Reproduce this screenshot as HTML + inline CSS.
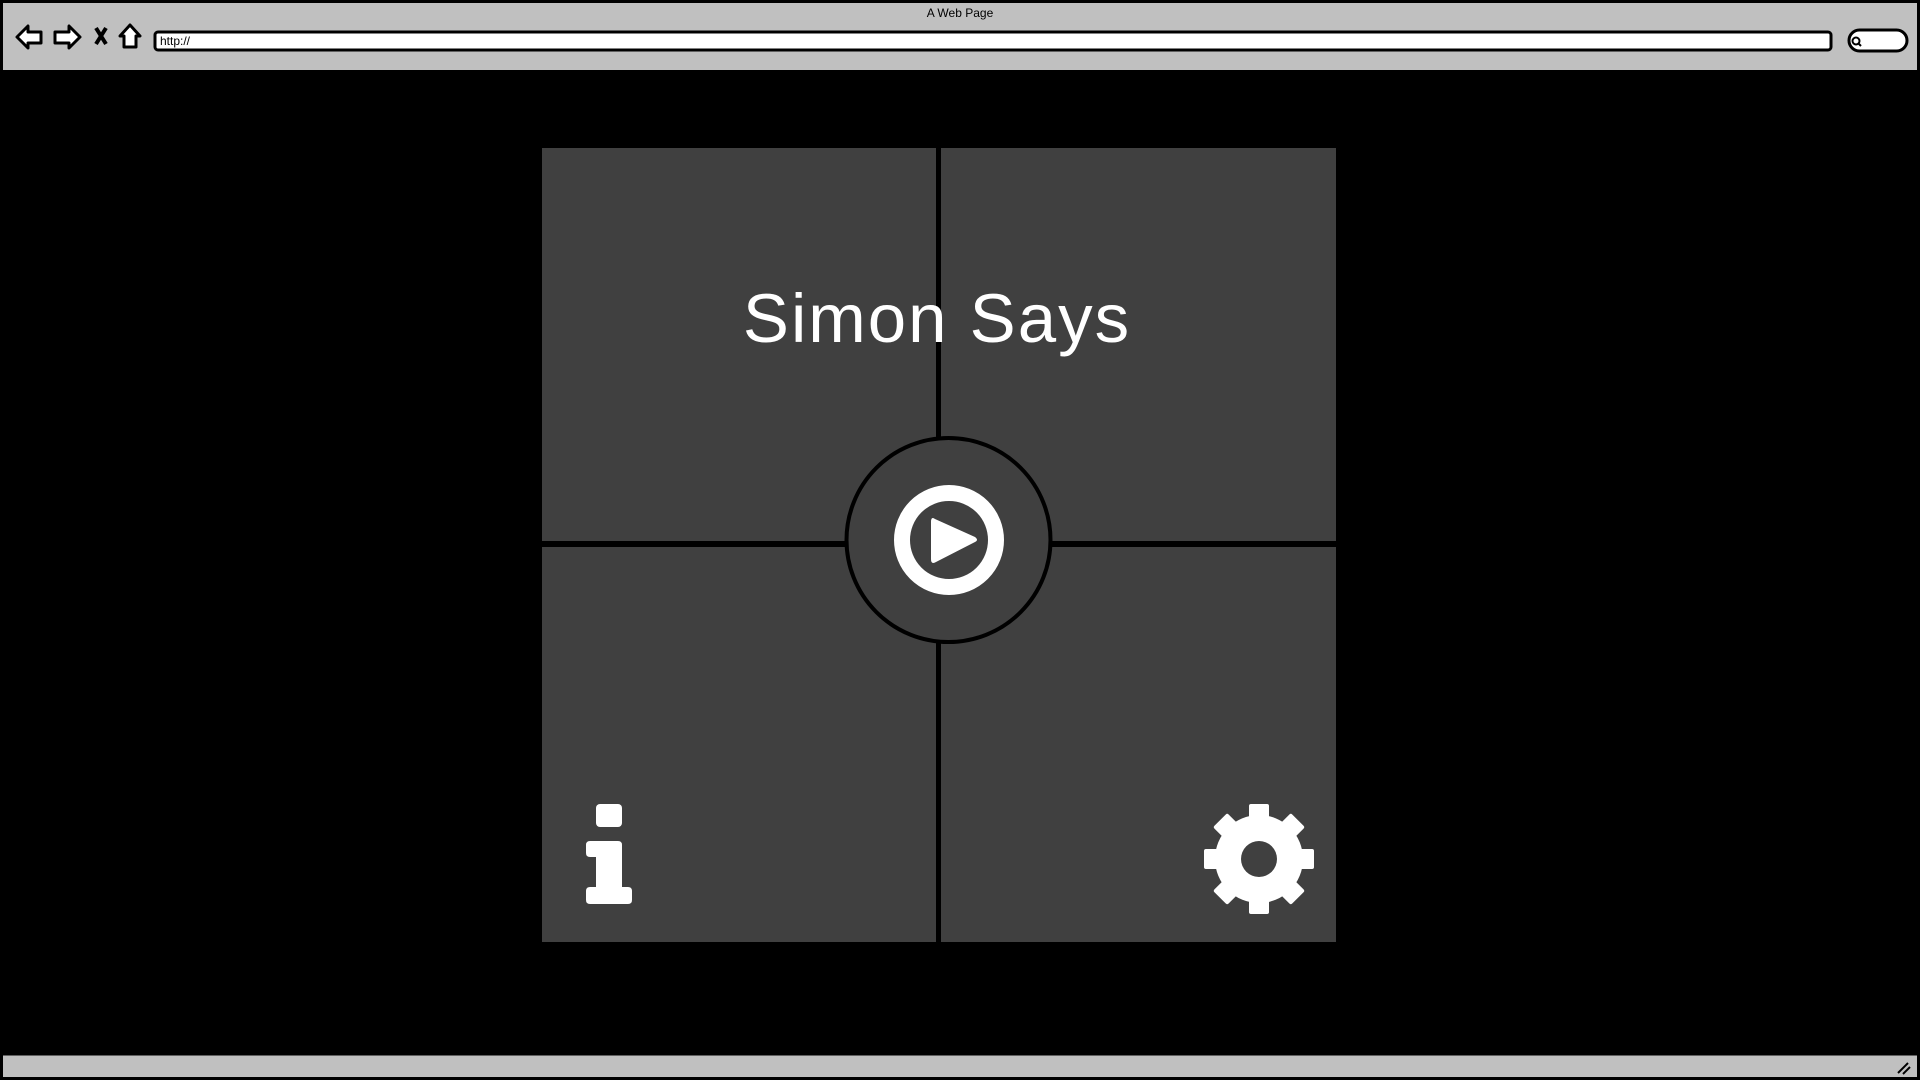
<!DOCTYPE html>
<html><head><style>
html,body{margin:0;padding:0;background:#000;width:1920px;height:1080px;overflow:hidden;font-family:"Liberation Sans",sans-serif}
</style></head><body>
<svg width="1920" height="1080" viewBox="0 0 1920 1080" xmlns="http://www.w3.org/2000/svg" style="position:absolute;left:0;top:0">
<rect x="0" y="0" width="1920" height="1080" fill="#000"/>
<rect x="1.5" y="1.5" width="1917" height="70" fill="#c0c0c0" stroke="#000" stroke-width="3"/>
<text x="960" y="17" font-size="12" text-anchor="middle" fill="#000" font-family="Liberation Sans, sans-serif">A Web Page</text>
<path d="M17 37 L28 26 L28 32 L41 32 L41 43 L28 43 L28 48 Z" fill="#fff" stroke="#000" stroke-width="3" stroke-linejoin="round"/>
<path d="M80 37 L69 26 L69 32 L55 32 L55 43 L69 43 L69 48 Z" fill="#fff" stroke="#000" stroke-width="3" stroke-linejoin="round"/>
<path d="M96 28 L106 44 M106 28 L96 44" stroke="#000" stroke-width="4"/>
<path d="M130 25 L140 36 L136 36 L136 47 L124 47 L124 36 L120 36 Z" fill="#fff" stroke="#000" stroke-width="3" stroke-linejoin="round"/>
<rect x="155" y="32" width="1676" height="18" rx="3" fill="#fff" stroke="#000" stroke-width="3"/>
<text x="160" y="45" font-size="12" fill="#000">http://</text>
<rect x="1849" y="30" width="58" height="21" rx="10.5" fill="#fff" stroke="#000" stroke-width="3"/>
<circle cx="1856" cy="41" r="3.5" fill="none" stroke="#000" stroke-width="2"/>
<path d="M1858 43 L1861 46" stroke="#000" stroke-width="2"/>
<rect x="1.5" y="1054" width="1917" height="24.5" fill="#c0c0c0" stroke="#000" stroke-width="3"/>
<path d="M1898 1073 L1908 1063 M1903 1074 L1910 1067" stroke="#000" stroke-width="2"/>
<g fill="#404040" stroke="#000" stroke-width="2">
<rect x="541" y="147" width="396" height="396"/>
<rect x="940" y="147" width="397" height="396"/>
<rect x="541" y="546" width="396" height="397"/>
<rect x="940" y="546" width="397" height="397"/>
</g>
<rect x="936" y="147" width="5" height="796" fill="#000"/>
<rect x="541" y="541" width="796" height="5" fill="#000"/>
<text x="937" y="342" font-size="69" letter-spacing="2" text-anchor="middle" fill="#fff" font-family="Liberation Sans, sans-serif">Simon Says</text>
<circle cx="948.5" cy="540" r="102" fill="#404040" stroke="#000" stroke-width="4"/>
<circle cx="949" cy="540" r="47" fill="none" stroke="#fff" stroke-width="16"/>
<path d="M935 519 Q931 516 931 522 L931 559 Q931 565 936 562 L975 542 Q979 540 975 537 Z" fill="#fff"/>
<rect x="596" y="804" width="26" height="23" rx="4" fill="#fff"/>
<path d="M590 841 L618 841 Q622 841 622 845 L622 887 L628 887 Q632 887 632 891 L632 900 Q632 904 628 904 L590 904 Q586 904 586 900 L586 891 Q586 887 590 887 L596 887 L596 857 L590 857 Q586 857 586 853 L586 845 Q586 841 590 841 Z" fill="#fff"/>
<g transform="translate(1259,859)" fill="#fff">
<circle r="44"/>
<g id="t"><rect x="-10" y="-55" width="20" height="20" rx="2"/></g>
<use href="#t" transform="rotate(45)"/>
<use href="#t" transform="rotate(90)"/>
<use href="#t" transform="rotate(135)"/>
<use href="#t" transform="rotate(180)"/>
<use href="#t" transform="rotate(225)"/>
<use href="#t" transform="rotate(270)"/>
<use href="#t" transform="rotate(315)"/>
<circle r="18" fill="#404040"/>
</g>
</svg>
</body></html>
